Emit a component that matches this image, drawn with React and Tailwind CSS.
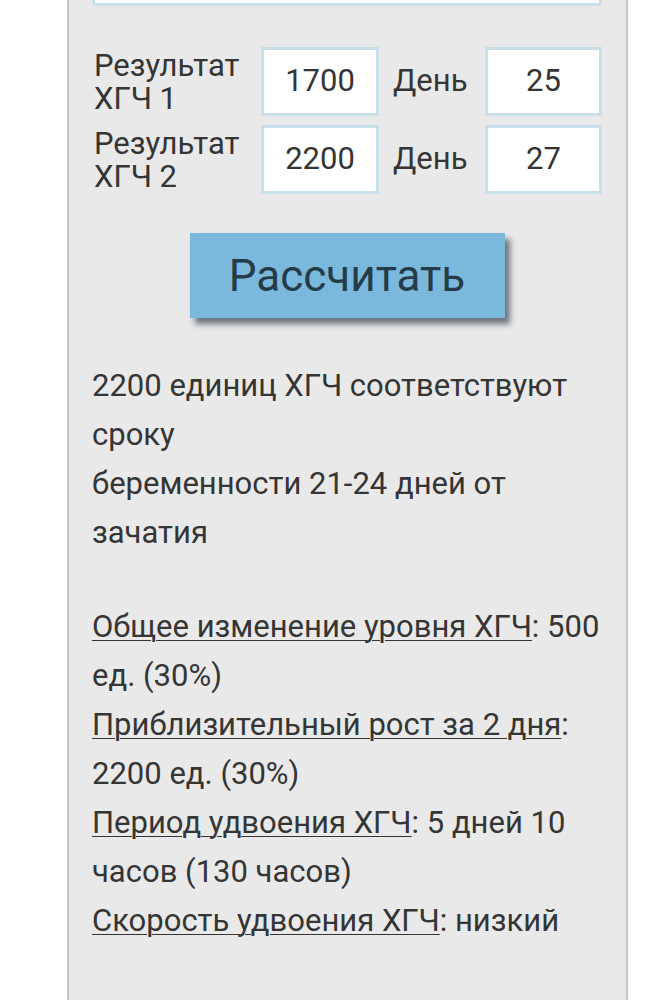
export default function App() {
    const rows = [
        { n: 1, value: '1700', day: '25' },
        { n: 2, value: '2200', day: '27' },
    ];

    const stats = [
        { label: 'Общее изменение уровня ХГЧ', value: '500 ед. (30%)' },
        { label: 'Приблизительный рост за 2 дня', value: '2200 ед. (30%)' },
        { label: 'Период удвоения ХГЧ', value: '5 дней 10 часов (130 часов)' },
        { label: 'Скорость удвоения ХГЧ', value: 'низкий' },
    ];

    return (
        <div className="min-h-screen bg-white overflow-hidden font-['Roboto',sans-serif] text-[#353535]">
            <div className="ml-[67px] w-[561px] -mt-[60px] h-[1100px] bg-[#e9e9e9] border-x-2 border-[#c6c6c6] pl-[23px] pr-[24px]">
                <div className="h-[66px] bg-white border-[3px] border-[#c8dfea] rounded-[4px]"></div>

                <div className="mt-[41px] flex flex-col gap-[9px]">
                    {rows.map((r) => (
                        <div key={r.n} className="flex items-center h-[69px]">
                            <div className="w-[169px] pl-[2px] text-[31px] leading-[33px] whitespace-nowrap">
                                Результат<br />ХГЧ {r.n}
                            </div>
                            <div className="w-[118px] h-[69px] bg-white border-[3px] border-[#c8dfea] flex items-center justify-center text-[31px]">
                                {r.value}
                            </div>
                            <div className="w-[106px] pl-[14px] text-[31px]">День</div>
                            <div className="w-[117px] h-[69px] bg-white border-[3px] border-[#c8dfea] flex items-center justify-center text-[31px]">
                                {r.day}
                            </div>
                        </div>
                    ))}
                </div>

                <div className="mt-[39px] flex justify-center">
                    <button className="w-[315px] h-[85px] bg-[#7ab8dc] text-[#263b48] text-[44px] shadow-[5px_6px_6px_rgba(40,50,60,0.65)]">
                        Рассчитать
                    </button>
                </div>

                <div className="mt-[43px] text-[31px] leading-[49px]">
                    <p>
                        2200 единиц ХГЧ соответствуют сроку
                        <br />
                        беременности 21-24 дней от зачатия
                    </p>
                    <div className="h-[45px]"></div>
                    {stats.map((s) => (
                        <p key={s.label}>
                            <span className="underline underline-offset-[3px] decoration-1">{s.label}</span>: {s.value}
                        </p>
                    ))}
                </div>
            </div>
        </div>
    );
}
